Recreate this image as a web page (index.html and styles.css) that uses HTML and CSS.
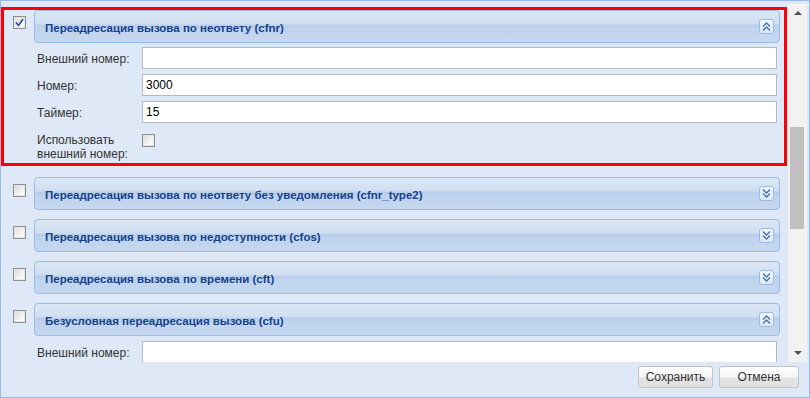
FILE: index.html
```html
<!DOCTYPE html>
<html lang="ru">
<head>
    <meta charset="UTF-8">
    <title>Переадресация вызова</title>
    <link rel="stylesheet" href="styles.css">
</head>
<body>
    <div class="window">
        <div class="scroller">
            <div class="content">

                <!-- cfnr, expanded -->
                <div class="row row-active">
                    <span class="check checked">
                        <svg width="9" height="9" viewBox="0 0 9 9"><path d="M1 4.5 L3.5 7.5 L8 1" fill="none" stroke="#26479a" stroke-width="1.6"/></svg>
                    </span>
                    <div class="panel">
                        <div class="panel-header">
                            <span class="panel-title">Переадресация вызова по неответу (cfnr)</span>
                            <span class="tool">
                                <svg width="9" height="9" viewBox="0 0 9 9"><path d="M1 4.5 L4.5 1 L8 4.5 M1 8.5 L4.5 5 L8 8.5" fill="none" stroke="#4170b0" stroke-width="1.3"/></svg>
                            </span>
                        </div>
                        <div class="panel-body">
                            <div class="field">
                                <label class="field-label">Внешний номер:</label>
                                <input class="field-input" type="text" value="">
                            </div>
                            <div class="field">
                                <label class="field-label">Номер:</label>
                                <input class="field-input" type="text" value="3000">
                            </div>
                            <div class="field">
                                <label class="field-label">Таймер:</label>
                                <input class="field-input" type="text" value="15">
                            </div>
                            <div class="field field-check">
                                <label class="field-label">Использовать<br>внешний номер:</label>
                                <span class="check"></span>
                            </div>
                        </div>
                    </div>
                </div>

                <div class="row">
                    <span class="check"></span>
                    <div class="panel">
                        <div class="panel-header">
                            <span class="panel-title">Переадресация вызова по неответу без уведомления (cfnr_type2)</span>
                            <span class="tool">
                                <svg width="9" height="9" viewBox="0 0 9 9"><path d="M1 0.5 L4.5 4 L8 0.5 M1 4.5 L4.5 8 L8 4.5" fill="none" stroke="#4170b0" stroke-width="1.3"/></svg>
                            </span>
                        </div>
                    </div>
                </div>

                <div class="row">
                    <span class="check"></span>
                    <div class="panel">
                        <div class="panel-header">
                            <span class="panel-title">Переадресация вызова по недоступности (cfos)</span>
                            <span class="tool">
                                <svg width="9" height="9" viewBox="0 0 9 9"><path d="M1 0.5 L4.5 4 L8 0.5 M1 4.5 L4.5 8 L8 4.5" fill="none" stroke="#4170b0" stroke-width="1.3"/></svg>
                            </span>
                        </div>
                    </div>
                </div>

                <div class="row">
                    <span class="check"></span>
                    <div class="panel">
                        <div class="panel-header">
                            <span class="panel-title">Переадресация вызова по времени (cft)</span>
                            <span class="tool">
                                <svg width="9" height="9" viewBox="0 0 9 9"><path d="M1 0.5 L4.5 4 L8 0.5 M1 4.5 L4.5 8 L8 4.5" fill="none" stroke="#4170b0" stroke-width="1.3"/></svg>
                            </span>
                        </div>
                    </div>
                </div>

                <div class="row">
                    <span class="check"></span>
                    <div class="panel">
                        <div class="panel-header">
                            <span class="panel-title">Безусловная переадресация вызова (cfu)</span>
                            <span class="tool">
                                <svg width="9" height="9" viewBox="0 0 9 9"><path d="M1 4.5 L4.5 1 L8 4.5 M1 8.5 L4.5 5 L8 8.5" fill="none" stroke="#4170b0" stroke-width="1.3"/></svg>
                            </span>
                        </div>
                        <div class="panel-body panel-body-cut">
                            <div class="field">
                                <label class="field-label">Внешний номер:</label>
                                <input class="field-input" type="text" value="">
                            </div>
                        </div>
                    </div>
                </div>

            </div>

            <!-- vertical scrollbar -->
            <div class="scrollbar">
                <span class="arrow arrow-up"></span>
                <div class="track">
                    <div class="thumb"></div>
                </div>
                <span class="arrow arrow-down"></span>
            </div>
        </div>

        <div class="toolbar">
            <button type="button" class="btn btn-save">Сохранить</button>
            <button type="button" class="btn btn-cancel">Отмена</button>
        </div>
    </div>
</body>
</html>
```

FILE: styles.css
```css
body {
    margin: 0;
    background: #ffffff;
    font-family: "Liberation Sans", Arial, sans-serif;
    font-size: 12px;
    color: #222222;
}

.window {
    width: 810px;
    height: 398px;
    box-sizing: border-box;
    border: 1px solid #99bbe8;
    background: #dfe8f6;
    display: flex;
    flex-direction: column;
}

.scroller {
    height: 361px;
    display: flex;
}

.content {
    width: 787px;
    box-sizing: border-box;
    padding: 9px 4px 0 3px;
    overflow: hidden;
}

.row {
    display: flex;
    align-items: flex-start;
    gap: 8px;
    padding: 0 4px 0 9px;
    margin-bottom: 9px;
}

.row-active {
    outline: 3px solid #ff0000;
    margin-bottom: 14px;
}

/* checkboxes */
.check {
    width: 13px;
    height: 13px;
    box-sizing: border-box;
    border: 1px solid #8e8f8f;
    background: linear-gradient(135deg, #d8d8d8 0%, #f4f4f4 60%, #ffffff 100%);
    box-shadow: inset 0 0 0 1px #e6e6e6;
    margin-top: 7px;
    flex: none;
    display: flex;
    align-items: center;
    justify-content: center;
}

.row-active > .check {
    margin-top: 6px;
}

.check.checked {
    background: linear-gradient(135deg, #dcdcdc 0%, #f4f4f4 60%, #ffffff 100%);
}

/* panels */
.panel {
    flex: 1;
    min-width: 0;
}

.panel-header {
    height: 33px;
    box-sizing: border-box;
    border: 1px solid #99bbe8;
    border-radius: 4px;
    background: linear-gradient(#dce7f5 0%, #d0dff1 40%, #b5cceb 48%, #bfd3ee 55%, #c5d8ef 100%);
    display: flex;
    align-items: center;
    justify-content: space-between;
    padding: 0 5px 0 10px;
}

.panel-title {
    font-weight: bold;
    font-size: 11.5px;
    color: #15428b;
    padding-top: 2px;
}

.tool {
    width: 15px;
    height: 15px;
    box-sizing: border-box;
    border: 1px solid #99bbe8;
    border-radius: 3px;
    background: linear-gradient(#f3f7fc, #dde8f6);
    display: flex;
    align-items: center;
    justify-content: center;
}

.panel-body {
    padding: 4px 3px 2px 3px;
    display: flex;
    flex-direction: column;
    gap: 5px;
}

.panel-body-cut {
    padding-top: 5px;
}

.field {
    display: flex;
    align-items: flex-start;
}

.field-label {
    width: 105px;
    flex: none;
    padding-top: 5px;
    line-height: 14px;
    color: #333333;
}

.field-input {
    flex: 1;
    height: 22px;
    box-sizing: border-box;
    margin: 0;
    border: 1px solid #b5b8c8;
    background: #ffffff;
    padding: 0 3px;
    font-family: "Liberation Sans", Arial, sans-serif;
    font-size: 12px;
    color: #000000;
}

.field-check .check {
    margin-top: 6px;
}

/* scrollbar */
.scrollbar {
    width: 19px;
    margin: 3px 2px 0 0;
    background: #f2f2f2;
    display: flex;
    flex-direction: column;
    align-items: center;
}

.arrow {
    width: 0;
    height: 0;
    border-left: 4px solid transparent;
    border-right: 4px solid transparent;
    flex: none;
}

.arrow-up {
    border-bottom: 4px solid #505050;
    margin: 7px 0 6px;
}

.arrow-down {
    border-top: 4px solid #505050;
    margin: 0 0 7px;
}

.track {
    flex: 1;
    width: 100%;
    display: flex;
    flex-direction: column;
    align-items: flex-start;
}

.thumb {
    width: 14px;
    height: 102px;
    margin: 106px 0 0 2px;
    background: #c1c1c1;
}

/* buttons */
.toolbar {
    flex: 1;
    display: flex;
    justify-content: flex-end;
    align-items: flex-start;
    gap: 6px;
    padding: 4px 10px 0 0;
}

.btn {
    height: 22px;
    box-sizing: border-box;
    border: 1px solid #c4c4c4;
    border-radius: 3px;
    background: linear-gradient(#ffffff 0%, #f5f5f5 50%, #e3e3e3 55%, #e1e1e1 100%);
    font-family: "Liberation Sans", Arial, sans-serif;
    font-size: 12px;
    color: #333333;
    padding: 0;
    cursor: pointer;
}

.btn-save {
    width: 75px;
}

.btn-cancel {
    width: 80px;
}
```
